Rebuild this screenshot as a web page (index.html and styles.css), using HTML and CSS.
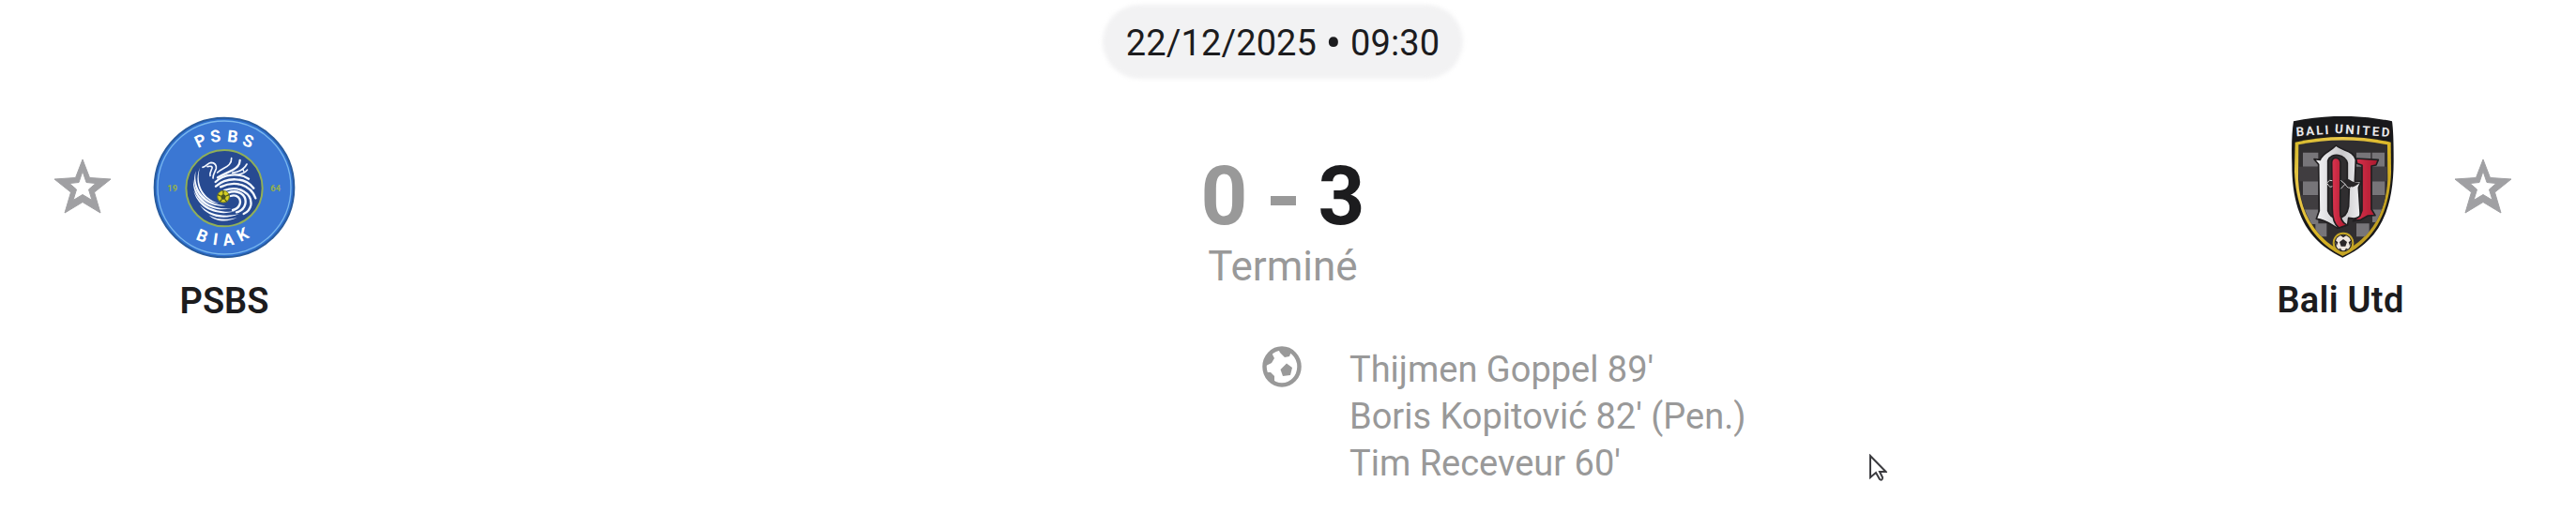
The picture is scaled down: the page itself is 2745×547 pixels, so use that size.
FILE: index.html
```html
<!DOCTYPE html>
<html lang="fr">
<head>
    <meta charset="UTF-8">
    <meta name="viewport" content="width=device-width, initial-scale=1.0">
    <title>PSBS - Bali Utd</title>
    <link rel="stylesheet" href="styles.css">
</head>
<body>
    <div class="match">
        <div class="match-date"><span>22/12/2025 <b>•</b> 09:30</span></div>

        <div class="match-header">
            <div class="side side-home">
                <svg class="star" viewBox="0 0 62 59"><path fill-rule="evenodd" d="M31 1 L38.500 20.500 L61 22 L43.500 36 L50 58 L31 46.500 L12 58 L18.500 36 L1 22 L23.500 20.500Z M31 13.500 L27 25.500 L17 26.500 L24.500 33 L21 44.500 L31 38.500 L41 44.500 L37.500 33 L45 26.500 L35 25.500Z"/></svg>
                <div class="team">
                    <!-- PSBS Biak -->
                    <svg class="crest crest-psbs" viewBox="40 42 456 456">
                        <circle cx="268" cy="270" r="223" fill="#2f70cf" stroke="#285b9d" stroke-width="6"/>
                        <circle cx="268" cy="270" r="213" fill="#3b77d3" stroke="#79b7ee" stroke-width="4"/>
                        <circle cx="268" cy="272" r="122" fill="#274a91" stroke="#90af58" stroke-width="6"/>
                        <g class="crest-ring">
                            <text transform="translate(184 144) rotate(-25)">P</text>
                            <text transform="translate(226 126) rotate(-8)">S</text>
                            <text transform="translate(276 123) rotate(6)">B</text>
                            <text transform="translate(323 133) rotate(20)">S</text>
                            <text transform="translate(175 435) rotate(22)">B</text>
                            <text transform="translate(230 452) rotate(8)">I</text>
                            <text transform="translate(266 457) rotate(-7)">A</text>
                            <text transform="translate(320 444) rotate(-26)">K</text>
                        </g>
                        <g class="crest-year">
                            <text x="86" y="282">19</text>
                            <text x="416" y="282">64</text>
                        </g>
                        <!-- head and crest feathers -->
                        <g fill="none" stroke="#f4f8ff" stroke-width="5" stroke-linecap="round">
                            <path d="M199 205 C211 203 215 191 226 190 C238 190 244 200 242 209 C239 219 231 228 232 240"/>
                            <path d="M214 203 C222 201 231 201 229 208 C226 217 220 224 223 232"/>
                            <path d="M291 176 C292 204 263 205 246 222"/>
                            <path d="M318 183 C317 213 284 216 247 238" stroke-width="7"/>
                            <path d="M340 195 C330 214 310 221 294 223"/>
                            <path d="M342 213 C331 227 314 229 300 229" stroke-width="4"/>
                            <path d="M327 211 L331 219" stroke-width="4"/>
                        </g>
                        <!-- wing -->
                        <g fill="none" stroke="#f4f8ff" stroke-width="7" stroke-linecap="round">
                            <path d="M240 252 C265 226 315 222 346 242"/>
                            <path d="M241 266 C276 235 334 236 362 272"/>
                            <path d="M256 268 C303 246 352 261 368 304"/>
                            <path d="M268 279 C317 262 358 290 353 326 C350 340 341 349 330 354"/>
                            <path d="M279 287 C314 274 341 295 335 323 C331 338 320 346 307 349"/>
                            <path d="M288 297 C309 290 324 306 317 325 C313 334 305 340 295 342"/>
                        </g>
                        <!-- tail -->
                        <g fill="#f4f8ff">
                            <path d="M190 206 C176 259 201 306 251 320 C212 320 163 272 190 206Z"/>
                            <path d="M177 217 C168 276 207 323 272 328 C205 337 156 278 177 217Z"/>
                            <path d="M169 243 C175 305 224 342 291 337 C222 352 164 311 169 243Z"/>
                            <path d="M170 280 C190 328 241 354 303 346 C237 365 182 332 170 280Z"/>
                            <path d="M190 326 C220 357 268 366 315 354 C263 378 212 361 190 326Z"/>
                            <path d="M219 359 C249 374 280 374 309 366 C276 383 240 378 219 359Z"/>
                        </g>
                        <circle cx="265" cy="299" r="19" fill="#d5ce24" stroke="#79801e" stroke-width="3"/>
                        <path d="M265 290 L274 297 L270 308 L260 308 L256 297Z" fill="#4b5520"/>
                        <path d="M265 280 V290 M274 297 L283 293 M270 308 L276 315 M260 308 L254 315 M256 297 L247 293" stroke="#4b5520" stroke-width="4"/>
                    </svg>
                    <div class="team-name">PSBS</div>
                </div>
            </div>

            <div class="result">
                <div class="score"><span>0</span><span class="dash"></span><span class="winner">3</span></div>
                <div class="status">Terminé</div>
            </div>

            <div class="side side-away">
                <div class="team">
                    <!-- Bali United -->
                    <svg class="crest crest-bali" viewBox="36 27 327 453">
                        <defs>
                            <linearGradient id="gold" x1="0" y1="0" x2="1" y2="1">
                                <stop offset="0" stop-color="#d5b92a"/>
                                <stop offset=".25" stop-color="#ebc94b"/>
                                <stop offset=".55" stop-color="#d8b423"/>
                                <stop offset="1" stop-color="#ad8d21"/>
                            </linearGradient>
                            <linearGradient id="silver">
                                <stop offset="0" stop-color="#f6f6f8"/>
                                <stop offset=".6" stop-color="#c8c7ca"/>
                                <stop offset="1" stop-color="#efeff1"/>
                            </linearGradient>
                            <linearGradient id="red">
                                <stop offset="0" stop-color="#dc3450"/>
                                <stop offset="1" stop-color="#a9182c"/>
                            </linearGradient>
                            <clipPath id="shield"><path d="M59 115 Q198 80 341 115 L341 238 C337 344 278 427 199 461 C120 424 66 342 60 238Z"/></clipPath>
                        </defs>
                        <path d="M42 43 Q198 10 357 43 Q362 76 362 165 C363 333 313 427 199 479 C83 425 37 330 37 181 Q34 94 42 43Z" fill="#19191b"/>
                        <path d="M47 110 Q198 76 353 110 L354 205 C350 335 298 429 199 474 C99 425 51 334 45 205Z" fill="url(#gold)"/>
                        <path d="M58 118 Q198 89 342 118 L343 229 C338 337 288 418 199 461 C112 417 62 336 57 229Z" fill="#302e30"/>
                        <g clip-path="url(#shield)">
                            <path d="M72 143 H121 V188 H72Z M72 235 H121 V279 H72Z M72 325 H121 V372 H72Z M243 143 H289 V188 H243Z M293 143 H333 V188 H293Z M294 235 H334 V279 H294Z M294 325 H334 V366 H294Z M112 370 H148 V412 H112Z M243 370 H284 V412 H243Z" fill="#777579"/>
                            <path d="M58 188 H121 V235 H58Z M58 280 H121 V325 H58Z M292 188 H345 V235 H292Z M292 280 H345 V325 H292Z" fill="#403d40"/>
                        </g>
                        <text class="bali-letter" x="51" y="91" transform="rotate(-4 51 91)" textLength="104">BALI</text>
                        <text class="bali-letter" x="173" y="80" transform="rotate(4 173 80)" textLength="176">UNITED</text>
                        <!-- monogram -->
                        <g stroke="#211f21" stroke-width="5" stroke-linejoin="round">
                            <path fill-rule="evenodd" d="M108 164 L127 166 C137 142 158 141 178 120 C199 139 233 135 241 166 L238 235 H258 L250 255 L256 350 L235 354 L218 352 L215 374 L183 385 C163 376 151 359 115 355 L124 329 L122 181Z M152 169 V329 C157 344 168 354 187 350 C208 351 215 332 218 315 L220 255 L202 243 L214 230 V177 C209 149 163 140 152 169Z" fill="url(#silver)"/>
                            <path d="M164 175 C164 155 189 156 192 175 L191 325 C190 351 197 368 213 375 L187 384 C172 372 166 350 166 323Z" fill="url(#red)"/>
                            <path d="M242 162 L313 166 L306 183 L291 186 V324 L303 344 L280 345 L257 358 L232 362 L254 346 L261 328 V184 L245 178Z" fill="url(#red)"/>
                        </g>
                        <path d="M150 241 Q156 228 165 233 V250 Q156 254 150 241Z M195 241 Q211 221 224 232 Q234 240 254 239 Q239 253 226 254 Q211 263 195 241Z" fill="#272527"/>
                        <path d="M150 239 Q157 228 166 233 M150 242 Q157 257 166 251 M193 232 L207 244 L193 259 M207 244 Q216 262 229 253" fill="none" stroke="#d8d7d9" stroke-width="3"/>
                        <circle cx="201" cy="432" r="34" fill="#c6a727"/>
                        <circle cx="201" cy="432" r="28" fill="#1d1b1e"/>
                        <circle cx="201" cy="432" r="25" fill="#eee6df"/>
                        <path d="M201 420 L213 429 L208 443 H194 L189 429Z M192 408 L211 408 L201 415Z M176 424 L184 430 L179 444Z M226 424 L218 430 L223 444Z M185 453 L192 449 L197 457Z M217 453 L210 449 L205 457Z" fill="#2b2628"/>
                    </svg>
                    <div class="team-name">Bali Utd</div>
                </div>
                <svg class="star" viewBox="0 0 62 59"><path fill-rule="evenodd" d="M31 1 L38.500 20.500 L61 22 L43.500 36 L50 58 L31 46.500 L12 58 L18.500 36 L1 22 L23.500 20.500Z M31 13.500 L27 25.500 L17 26.500 L24.500 33 L21 44.500 L31 38.500 L41 44.500 L37.500 33 L45 26.500 L35 25.500Z"/></svg>
            </div>
        </div>

        <div class="goals">
            <svg class="ball" viewBox="0 0 42 44">
                <ellipse cx="21" cy="22" rx="18.500" ry="19.500" fill="none" stroke="#999" stroke-width="4.500"/>
                <path d="M26 18.500 L32 23 L30 31 L22 32 L19.500 25Z M17 3 L31 6 L29 11 L24 12 L19 7Z M3 13 L10 7 L13 13 L10 18 L4 21Z M3 28 L9 28 L13 32 L13 39 L7 36Z" fill="#999"/>
            </svg>
            <ul class="scorers">
                <li>Thijmen Goppel 89'</li>
                <li>Boris Kopitović 82' (Pen.)</li>
                <li>Tim Receveur 60'</li>
            </ul>
        </div>
    </div>

    <svg class="cursor" viewBox="0 0 20 30"><path d="M2 2 V25 L8 20 L12 27 Q15 29 15 25 L12 19 H18.500Z"/></svg>
</body>
</html>
```
FILE: styles.css
```css
* { margin: 0; padding: 0; box-sizing: border-box; }
body { position: relative; height: 547px; overflow: hidden; background-color: #fff; font-family: Roboto, "Liberation Sans", sans-serif; color: #1c1c1e; }
svg { display: block; }
.match { padding: 3px 68px 0 57px; }

.match-date { width: 388px; height: 83px; margin: 0 auto; padding-top: 2px; position: relative; display: flex; align-items: center; justify-content: center; font-size: 38px; line-height: 44px; }
.match-date::before { content: ""; position: absolute; inset: 2px; border-radius: 40px; background-color: #f2f2f3; filter: blur(2px); }
.match-date span { position: relative; white-space: nowrap; letter-spacing: 0.1px; }
.match-date b { font-size: 50px; line-height: 0; font-weight: 400; vertical-align: -4px; }

.match-header { display: grid; grid-template-columns: 1fr 240px 1fr; height: 269px; padding-top: 38px; }
.side { display: flex; align-items: flex-start; }
.side-home { gap: 44px; }
.side-away { justify-content: flex-end; gap: 30px; }
.star { width: 62px; height: 59px; margin-top: 45px; overflow: visible; }
.star path { fill: #a0a0a3; stroke: #a0a0a3; stroke-width: 1; }
.team { width: 152px; display: flex; flex-direction: column; align-items: center; }
.side-away .team { width: 178px; }
.crest-psbs { width: 152px; height: 152px; }
.crest-bali { width: 109px; height: 151px; }
.crest-ring { fill: #fff; font-size: 53px; font-weight: 700; }
.crest-year { fill: #94b14c; font-size: 28px; font-weight: 700; }
.bali-letter { fill: #e8e8ea; font-size: 40px; font-weight: 700; }
.team-name { margin-top: 23px; font-size: 38px; line-height: 44px; font-weight: 600; white-space: nowrap; }
.side-away .team-name { margin-right: 4px; letter-spacing: 0.3px; }

.result { display: flex; flex-direction: column; align-items: center; color: #999; }
.score { display: flex; align-items: center; justify-content: center; gap: 24px; margin-top: 37px; font-size: 87px; line-height: 96px; font-weight: 700; }
.score .dash { width: 27px; height: 10px; margin-top: 9px; background-color: #999; }
.score .winner { color: #1c1c1e; }
.status { margin-top: 2px; font-size: 44px; line-height: 50px; }

.goals { display: grid; grid-template-columns: 1fr 42px 1fr; padding-right: 2px; color: #999; }
.ball { grid-column: 2; width: 42px; height: 44px; margin-top: 14px; }
.scorers { list-style: none; padding-left: 51px; padding-top: 14px; font-size: 38px; line-height: 50px; }

.cursor { position: absolute; left: 1991px; top: 484px; width: 20px; height: 30px; }
.cursor path { fill: #fff; stroke: #3c3c40; stroke-width: 2; }
```
